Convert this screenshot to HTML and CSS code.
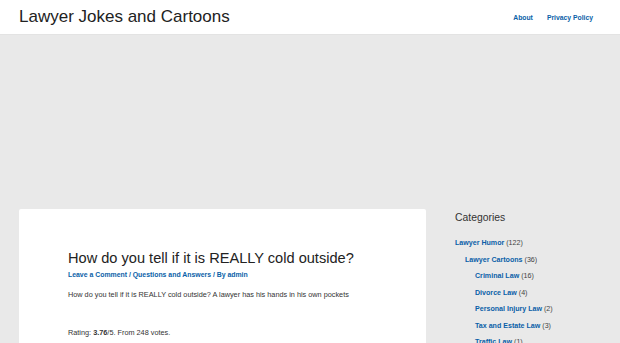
FILE: index.html
```html
<!DOCTYPE html>
<html lang="en">
<head>
    <meta charset="UTF-8">
    <title>Lawyer Jokes and Cartoons</title>
    <link rel="stylesheet" href="styles.css">
</head>
<body>
<div class="header">
    <a class="logo" href="#">Lawyer Jokes and Cartoons</a>
    <div class="nav">
        <a href="#">About</a>
        <a href="#">Privacy Policy</a>
    </div>
</div>

<div class="banner"></div>

<div class="main">
    <div class="card">
        <h2 class="post-title">How do you tell if it is REALLY cold outside?</h2>
        <div class="meta">
            <a href="#">Leave a Comment</a> / <a href="#">Questions and Answers</a> / By <a href="#">admin</a>
        </div>
        <p class="excerpt">How do you tell if it is REALLY cold outside? A lawyer has his hands in his own pockets</p>
        <p class="rating">Rating: <b>3.76</b>/5. From 248 votes.</p>
    </div>

    <div class="sidebar">
        <h3>Categories</h3>
        <ul class="cats">
            <li><a href="#">Lawyer Humor</a> (122)
                <ul>
                    <li><a href="#">Lawyer Cartoons</a> (36)
                        <ul>
                            <li><a href="#">Criminal Law</a> (16)</li>
                            <li><a href="#">Divorce Law</a> (4)</li>
                            <li><a href="#">Personal Injury Law</a> (2)</li>
                            <li><a href="#">Tax and Estate Law</a> (3)</li>
                            <li><a href="#">Traffic Law</a> (1)</li>
                        </ul>
                    </li>
                </ul>
            </li>
        </ul>
    </div>
</div>
</body>
</html>
```

FILE: styles.css
```css
* {
    margin: 0;
    padding: 0;
}

body {
    background-color: #e9e9e9;
    font-family: "Liberation Sans", Arial, sans-serif;
    color: #3a3a3a;
    overflow: hidden;
}

a {
    color: #0a5fa8;
    text-decoration: none;
}

.header {
    height: 34px;
    background-color: #fff;
    border-bottom: 1px solid #e3e3e3;
    display: flex;
    align-items: center;
    justify-content: space-between;
    padding: 0 27px 0 19px;
}

.logo {
    color: #222;
    font-size: 17px;
    margin-top: -1px;
}

.nav {
    display: flex;
    gap: 14px;
    font-size: 6.8px;
    font-weight: bold;
}

.banner {
    height: 174px;
}

.main {
    display: flex;
    padding: 0 19px;
    gap: 29px;
}

.card {
    width: 407px;
    flex-shrink: 0;
    background-color: #fff;
    border-radius: 2px;
    padding: 39px 49px 0;
    box-sizing: border-box;
    height: 200px;
}

.post-title {
    font-size: 14.6px;
    font-weight: normal;
    color: #222;
    line-height: 20px;
}

.meta {
    font-size: 6.9px;
    line-height: 11px;
    font-weight: bold;
    color: #0a5fa8;
    margin-top: 1px;
}

.excerpt {
    font-size: 7.3px;
    line-height: 11px;
    color: #333;
    margin-top: 8.5px;
}

.rating {
    font-size: 7.3px;
    line-height: 11px;
    color: #333;
    margin-top: 27px;
}

.sidebar {
    padding-top: 2px;
}

.sidebar h3 {
    font-size: 10.4px;
    font-weight: normal;
    color: #333;
    line-height: 14px;
    margin-bottom: 10px;
}

.cats {
    list-style: none;
    font-size: 7.1px;
    color: #444;
}

.cats ul {
    list-style: none;
    padding-left: 10px;
}

.cats li {
    line-height: 16.5px;
}

.cats a {
    font-weight: bold;
}
```
